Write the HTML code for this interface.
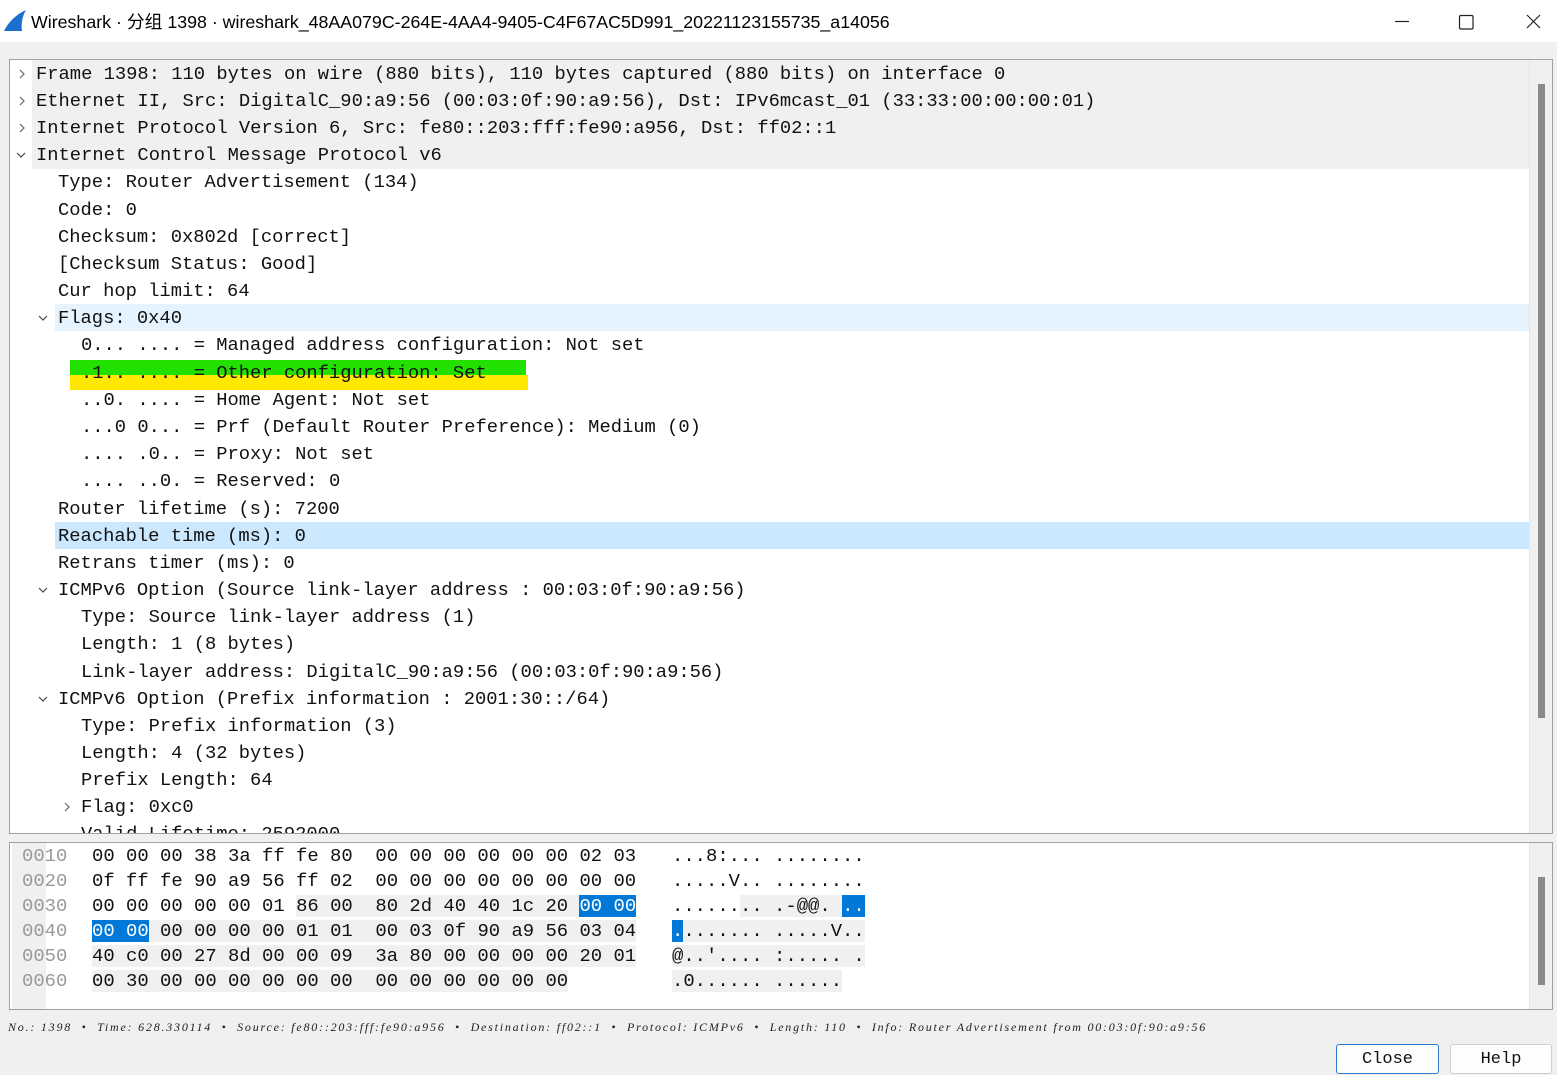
<!DOCTYPE html>
<html><head><meta charset="utf-8"><style>
*{margin:0;padding:0;box-sizing:border-box}
body{width:1557px;height:1073px;background:#f0f0f0;position:relative;overflow:hidden;font-family:"Liberation Mono",monospace}
.title{position:absolute;left:0;top:0;width:1557px;height:42px;background:#fff}
.title .t{position:absolute;left:31px;top:8px;font:17.8px "Liberation Sans","Noto Sans CJK SC",sans-serif;color:#000;white-space:nowrap}
.tree{position:absolute;left:9px;top:59px;width:1544px;height:775px;background:#fff;border:1px solid #a0a0a0;overflow:hidden}
.row{position:absolute;left:0;height:27px;line-height:29px;font-size:18.8px;color:#111;white-space:pre}
.bg{position:absolute}
.ar{position:absolute;width:10px;height:10px}
.sb{position:absolute;right:0;top:0;width:23px;height:100%;background:#f0f0f0;border-left:1px solid #e6e6e6}
.thumb{position:absolute;background:#8a8a8a;width:7px;left:8px}
.hex{position:absolute;left:9px;top:842px;width:1544px;height:168px;background:#fff;border:1px solid #a0a0a0;overflow:hidden}
.hr{position:absolute;height:25px;line-height:26px;font-size:18.9px;white-space:pre;color:#111}
.off{color:#999}
.g{background:#f0f0f0}
.sel{background:#0078d7;color:#fff}
.status{position:absolute;left:8px;top:1020px;font:italic 12px "Liberation Serif",serif;color:#222;white-space:pre;letter-spacing:1.78px}
.btn{position:absolute;top:1044px;height:30px;background:#fdfdfd;border:1px solid #cfcfcf;border-radius:3px;font:17px "Liberation Mono",monospace;text-align:center;line-height:30px;color:#111}
</style></head><body>
<div class="title">
<svg style="position:absolute;left:3px;top:9px" width="24" height="24" viewBox="0 0 24 24"><path d="M1 22 C5 14 12 6 23 1 C19 8 18 15 19 22 Z" fill="#1a6fd0"/></svg>
<div class="t">Wireshark · 分组 1398 · wireshark_48AA079C-264E-4AA4-9405-C4F67AC5D991_20221123155735_a14056</div>
<svg style="position:absolute;left:1394px;top:13px" width="150" height="18" viewBox="0 0 150 18"><path d="M1 8.5H15" stroke="#222" stroke-width="1.2"/><path d="M67 2.5h10.5q1.5 0 1.5 1.5v10.5q0 1.5-1.5 1.5h-10.5q-1.5 0-1.5-1.5v-10.5q0-1.5 1.5-1.5z" fill="none" stroke="#222" stroke-width="1.2"/><path d="M133 2l13 13M146 2l-13 13" stroke="#222" stroke-width="1.2"/></svg>
</div>

<div class="tree">
<div class="bg" style="left:22px;top:0;width:1497px;height:109px;background:#f0f0f0"></div>
<div class="bg" style="left:45px;top:244px;width:1474px;height:27px;background:#e5f3ff"></div>
<div class="bg" style="left:60px;top:300px;width:456px;height:15px;background:#22e000"></div>
<div class="bg" style="left:60px;top:315px;width:458px;height:15px;background:#ffe800"></div>
<div class="bg" style="left:45px;top:462px;width:1474px;height:27px;background:#cce8ff"></div>

<svg class="ar" style="left:7px;top:9px" viewBox="0 0 10 10"><path d="M3 1l4 4-4 4" fill="none" stroke="#666" stroke-width="1.2"/></svg>
<svg class="ar" style="left:7px;top:36px" viewBox="0 0 10 10"><path d="M3 1l4 4-4 4" fill="none" stroke="#666" stroke-width="1.2"/></svg>
<svg class="ar" style="left:7px;top:63px" viewBox="0 0 10 10"><path d="M3 1l4 4-4 4" fill="none" stroke="#666" stroke-width="1.2"/></svg>
<svg class="ar" style="left:6px;top:90px" viewBox="0 0 10 10"><path d="M1 3l4 4 4-4" fill="none" stroke="#444" stroke-width="1.2"/></svg>
<svg class="ar" style="left:28px;top:253px" viewBox="0 0 10 10"><path d="M1 3l4 4 4-4" fill="none" stroke="#444" stroke-width="1.2"/></svg>
<svg class="ar" style="left:28px;top:525px" viewBox="0 0 10 10"><path d="M1 3l4 4 4-4" fill="none" stroke="#444" stroke-width="1.2"/></svg>
<svg class="ar" style="left:28px;top:634px" viewBox="0 0 10 10"><path d="M1 3l4 4 4-4" fill="none" stroke="#444" stroke-width="1.2"/></svg>
<svg class="ar" style="left:52px;top:742px" viewBox="0 0 10 10"><path d="M3 1l4 4-4 4" fill="none" stroke="#666" stroke-width="1.2"/></svg>

<div class="row" style="left:26px;top:0px">Frame 1398: 110 bytes on wire (880 bits), 110 bytes captured (880 bits) on interface 0</div>
<div class="row" style="left:26px;top:27px">Ethernet II, Src: DigitalC_90:a9:56 (00:03:0f:90:a9:56), Dst: IPv6mcast_01 (33:33:00:00:00:01)</div>
<div class="row" style="left:26px;top:54px">Internet Protocol Version 6, Src: fe80::203:fff:fe90:a956, Dst: ff02::1</div>
<div class="row" style="left:26px;top:81px">Internet Control Message Protocol v6</div>
<div class="row" style="left:48px;top:108px">Type: Router Advertisement (134)</div>
<div class="row" style="left:48px;top:136px">Code: 0</div>
<div class="row" style="left:48px;top:163px">Checksum: 0x802d [correct]</div>
<div class="row" style="left:48px;top:190px">[Checksum Status: Good]</div>
<div class="row" style="left:48px;top:217px">Cur hop limit: 64</div>
<div class="row" style="left:48px;top:244px">Flags: 0x40</div>
<div class="row" style="left:71px;top:271px">0... .... = Managed address configuration: Not set</div>
<div class="row" style="left:71px;top:299px">.1.. .... = Other configuration: Set</div>
<div class="row" style="left:71px;top:326px">..0. .... = Home Agent: Not set</div>
<div class="row" style="left:71px;top:353px">...0 0... = Prf (Default Router Preference): Medium (0)</div>
<div class="row" style="left:71px;top:380px">.... .0.. = Proxy: Not set</div>
<div class="row" style="left:71px;top:407px">.... ..0. = Reserved: 0</div>
<div class="row" style="left:48px;top:435px">Router lifetime (s): 7200</div>
<div class="row" style="left:48px;top:462px">Reachable time (ms): 0</div>
<div class="row" style="left:48px;top:489px">Retrans timer (ms): 0</div>
<div class="row" style="left:48px;top:516px">ICMPv6 Option (Source link-layer address : 00:03:0f:90:a9:56)</div>
<div class="row" style="left:71px;top:543px">Type: Source link-layer address (1)</div>
<div class="row" style="left:71px;top:570px">Length: 1 (8 bytes)</div>
<div class="row" style="left:71px;top:598px">Link-layer address: DigitalC_90:a9:56 (00:03:0f:90:a9:56)</div>
<div class="row" style="left:48px;top:625px">ICMPv6 Option (Prefix information : 2001:30::/64)</div>
<div class="row" style="left:71px;top:652px">Type: Prefix information (3)</div>
<div class="row" style="left:71px;top:679px">Length: 4 (32 bytes)</div>
<div class="row" style="left:71px;top:706px">Prefix Length: 64</div>
<div class="row" style="left:71px;top:733px">Flag: 0xc0</div>
<div class="row" style="left:71px;top:760px">Valid Lifetime: 2592000</div>
<div class="sb"><div class="thumb" style="top:24px;height:634px"></div></div>
</div>

<div class="hex">
<div class="bg" style="left:2px;top:0;width:34px;height:168px;background:#f0f0f0"></div>
<div class="hr off" style="left:12px;top:0px">0010</div>
<div class="hr off" style="left:12px;top:25px">0020</div>
<div class="hr off" style="left:12px;top:50px">0030</div>
<div class="hr off" style="left:12px;top:75px">0040</div>
<div class="hr off" style="left:12px;top:100px">0050</div>
<div class="hr off" style="left:12px;top:125px">0060</div>
<div class="hr" style="left:82px;top:0px">00 00 00 38 3a ff fe 80  00 00 00 00 00 00 02 03</div>
<div class="hr" style="left:82px;top:25px">0f ff fe 90 a9 56 ff 02  00 00 00 00 00 00 00 00</div>
<div class="hr" style="left:82px;top:50px">00 00 00 00 00 01 <span class="g">86 00  80 2d 40 40 1c 20 </span><span class="sel">00 00</span></div>
<div class="hr" style="left:82px;top:75px"><span class="sel">00 00</span><span class="g"> 00 00 00 00 01 01  00 03 0f 90 a9 56 03 04</span></div>
<div class="hr" style="left:82px;top:100px"><span class="g">40 c0 00 27 8d 00 00 09  3a 80 00 00 00 00 20 01</span></div>
<div class="hr" style="left:82px;top:125px"><span class="g">00 30 00 00 00 00 00 00  00 00 00 00 00 00</span></div>
<div class="hr" style="left:662px;top:0px">...8:... ........</div>
<div class="hr" style="left:662px;top:25px">.....V.. ........</div>
<div class="hr" style="left:662px;top:50px">......<span class="g">.. .-@@. </span><span class="sel">..</span></div>
<div class="hr" style="left:662px;top:75px"><span class="sel">.</span><span class="g">....... .....V..</span></div>
<div class="hr" style="left:662px;top:100px"><span class="g">@..'.... :..... .</span></div>
<div class="hr" style="left:662px;top:125px"><span class="g">.0...... ......</span></div>
<div class="sb"><div class="thumb" style="top:34px;height:108px"></div></div>
</div>

<div class="status">No.: 1398  •  Time: 628.330114  •  Source: fe80::203:fff:fe90:a956  •  Destination: ff02::1  •  Protocol: ICMPv6  •  Length: 110  •  Info: Router Advertisement from 00:03:0f:90:a9:56</div>

<div class="btn" style="left:1336px;width:103px;border-color:#2e7ad1">Close</div>
<div class="btn" style="left:1450px;width:102px">Help</div>
</body></html>
